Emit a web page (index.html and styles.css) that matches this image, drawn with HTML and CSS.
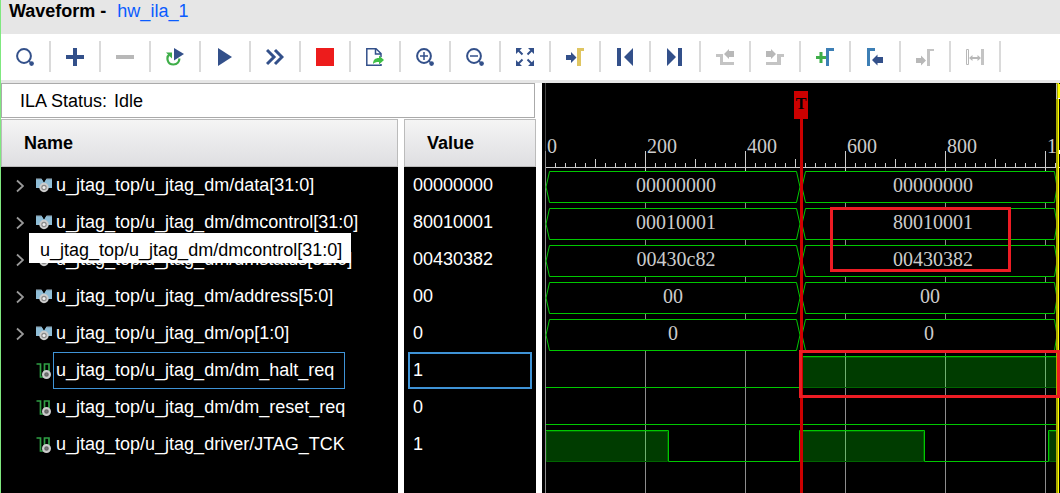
FILE: index.html
```html
<!DOCTYPE html>
<html lang="en">
<head>
<meta charset="utf-8">
<title>Waveform - hw_ila_1</title>
<link rel="stylesheet" href="styles.css">
</head>
<body>
<svg class="defs" aria-hidden="true">
  <defs>
    <symbol id="chevron" viewBox="0 0 8 14"><path d="M1 1.5L7 7L1 12.5" fill="none" stroke="#999" stroke-width="1.8"/></symbol>
    <symbol id="bus" viewBox="0 0 16 16">
      <path d="M0 1h6l2 3 2-3h6v9h-3l-5 1-5-1H0z" fill="#8fbdd6"/>
      <path d="M0 .8h5.500M10.500.8H16" stroke="#6f7f8a" fill="none"/>
      <path d="M6 1l2 3.500L10 1z" fill="#000"/>
      <circle cx="8" cy="9.500" r="3.700" fill="#8a8a8a" stroke="#ccc" stroke-width="2"/><circle cx="8" cy="9.500" r="1.500" fill="#eee"/>
    </symbol>
    <symbol id="scalar" viewBox="0 0 16 16">
      <path d="M.5 1h4v13h4V1h4.500v7" fill="none" stroke="#2f9e44" stroke-width="1.700"/>
      <circle cx="10.500" cy="11.500" r="3.400" fill="#666" stroke="#ccc" stroke-width="2.200"/><circle cx="10.500" cy="11.500" r="1" fill="#777"/>
    </symbol>
    <symbol id="lens" viewBox="0 0 18 18"><circle cx="8" cy="8" r="6.900" fill="none" stroke="#33508a" stroke-width="2"/><path d="M12.500 12.500l1.500 1.500" stroke="#33508a" stroke-width="2"/><circle cx="15.600" cy="15.600" r="2.300" fill="#33508a"/></symbol>
  </defs>
</svg>

<header class="titlebar"><h1 class="title">Waveform - </h1><a class="core" href="#hw_ila_1">hw_ila_1</a></header>

<nav class="toolbar" aria-label="Waveform tools">
  <button class="tool" aria-label="Find"><svg class="icon" viewBox="0 -1 18 19"><use href="#lens" width="18" height="18"/></svg></button>
  <button class="tool" aria-label="Add"><svg class="icon" viewBox="0 -1 18 19"><path d="M0 7h7V0h4v7h7v4h-7v7H7v-7H0z" fill="#33508a"/></svg></button>
  <button class="tool" aria-label="Remove"><svg class="icon" viewBox="0 -1 18 19"><path d="M0 7h18v4H0z" fill="#b8b8b8"/></svg></button>
  <button class="tool" aria-label="Auto re-trigger"><svg class="icon" viewBox="0 -1 18 19"><path d="M8 0l10 6-10 6.500z" fill="#33508a"/><path d="M3.500 6.500C0 9 1 16.500 7.500 16.500c4 0 6-3 5.800-6" fill="none" stroke="#3fae49" stroke-width="2.200"/><path d="M0 4.500h6v6z" fill="#3fae49"/></svg></button>
  <button class="tool" aria-label="Run trigger"><svg class="icon" viewBox="0 -1 18 19"><path d="M2 0l14 9-14 9z" fill="#33508a"/></svg></button>
  <button class="tool" aria-label="Run immediate"><svg class="icon" viewBox="0 -1 18 19"><path d="M1 2l7 7-7 7M9 2l7 7-7 7" fill="none" stroke="#33508a" stroke-width="3"/></svg></button>
  <button class="tool" aria-label="Stop"><svg class="icon" viewBox="0 -1 18 19"><path d="M0 0h18v18H0z" fill="#ed1c1c"/></svg></button>
  <button class="tool" aria-label="Export data"><svg class="icon" viewBox="0 -1 18 19"><path d="M15 9V5.500L10 .8H.8v16.400H15V16M9.500 1v5H15" fill="none" stroke="#33508a" stroke-width="1.500"/><path d="M7 16c0-4 2-6 6-6V7.500l5 4.500-5 4.500V14c-3 0-4.500.5-6 2z" fill="#3fbf46"/></svg></button>
  <button class="tool" aria-label="Zoom in"><svg class="icon" viewBox="0 -1 18 19"><use href="#lens" width="18" height="18"/><path d="M4 8h8M8 4v8" stroke="#33508a" stroke-width="1.500"/></svg></button>
  <button class="tool" aria-label="Zoom out"><svg class="icon" viewBox="0 -1 18 19"><use href="#lens" width="18" height="18"/><path d="M4 8h8" stroke="#33508a" stroke-width="1.500"/></svg></button>
  <button class="tool" aria-label="Zoom fit"><svg class="icon" viewBox="0 -1 18 19"><path d="M0 0h6L0 6zM12 0h6v6zM0 12v6h6zM18 12v6h-6z" fill="#33508a"/><path d="M2 2l4.500 4.500M16 2l-4.500 4.500M2 16l4.500-4.500M16 16l-4.500-4.500" stroke="#33508a" stroke-width="2"/></svg></button>
  <button class="tool" aria-label="Go to cursor"><svg class="icon" viewBox="0 -1 18 19"><path d="M0 7h5V4l5.500 5.500L5 15v-3H0z" fill="#33508a"/><path d="M11 0h7v3h-3v15h-4z" fill="#dfc561"/></svg></button>
  <button class="tool" aria-label="Go to first"><svg class="icon" viewBox="0 -1 18 19"><path d="M1 0h4v18H1zM17 0v18L8 9z" fill="#33508a"/></svg></button>
  <button class="tool" aria-label="Go to last"><svg class="icon" viewBox="0 -1 18 19"><path d="M12 0h4v18h-4zM1 0v18l9-9z" fill="#33508a"/></svg></button>
  <button class="tool" aria-label="Previous transition" disabled><svg class="icon" viewBox="0 -1 18 19"><path d="M0 6h7v8h11v3H4V9H0z" fill="#c4c4c4"/><path d="M8 6l5-5v2h5v6h-5v2z" fill="#b8b8b8"/></svg></button>
  <button class="tool" aria-label="Next transition" disabled><svg class="icon" viewBox="0 -1 18 19"><path d="M18 6h-7v8H0v3h15V9h3z" fill="#c4c4c4"/><path d="M10 6L5 1v2H0v6h5v2z" fill="#b8b8b8"/></svg></button>
  <button class="tool" aria-label="Add marker"><svg class="icon" viewBox="0 -1 18 19"><path d="M0 8h3.500V4h3v4H10v3H6.500v4h-3v-4H0z" fill="#3fae49"/><path d="M10 0h8v3h-5v15h-3z" fill="#3d7fb5"/></svg></button>
  <button class="tool" aria-label="Previous marker"><svg class="icon" viewBox="0 -1 18 19"><path d="M1 0h8v3H4v15H1z" fill="#3d7fb5"/><path d="M6 12l5.500-5.500V9H17v6h-5.500v2.500z" fill="#33508a"/></svg></button>
  <button class="tool" aria-label="Next marker" disabled><svg class="icon" viewBox="0 -1 18 19"><path d="M11 1h7v2h-4v15h-3z" fill="#c4c4c4"/><path d="M10 12.500L5 7.500V10H0v5h5v2.500z" fill="#b8b8b8"/></svg></button>
  <button class="tool" aria-label="Swap cursors" disabled><svg class="icon" viewBox="0 -1 18 19"><path d="M.5 1.500h2v15h-2z" fill="none" stroke="#b8b8b8"/><path d="M15 1h3v16h-3z" fill="#c4c4c4"/><path d="M3 10l3.500-3v2h5V7l3.500 3-3.500 3v-2h-5v2z" fill="#b8b8b8"/></svg></button>
</nav>

<main class="workspace">
  <section class="signals">
    <p class="status"><span>ILA Status:</span><span>Idle</span></p>
    <div class="list">
      <table class="table">
        <thead><tr><th class="name">Name</th><th class="value">Value</th></tr></thead>
        <tbody>
          <tr><td class="name"><div class="signal"><button class="expand" aria-label="Expand data"><svg class="chevron"><use href="#chevron"/></svg></button><svg class="kind"><use href="#bus"/></svg><span class="label">u_jtag_top/u_jtag_dm/data[31:0]</span></div></td><td class="value"><div class="reading">00000000</div></td></tr>
          <tr><td class="name"><div class="signal"><button class="expand" aria-label="Expand dmcontrol"><svg class="chevron"><use href="#chevron"/></svg></button><svg class="kind"><use href="#bus"/></svg><span class="label">u_jtag_top/u_jtag_dm/dmcontrol[31:0]</span><span class="tooltip" role="tooltip">u_jtag_top/u_jtag_dm/dmcontrol[31:0]</span></div></td><td class="value"><div class="reading">80010001</div></td></tr>
          <tr><td class="name"><div class="signal"><button class="expand" aria-label="Expand dmstatus"><svg class="chevron"><use href="#chevron"/></svg></button><svg class="kind"><use href="#bus"/></svg><span class="label">u_jtag_top/u_jtag_dm/dmstatus[31:0]</span></div></td><td class="value"><div class="reading">00430382</div></td></tr>
          <tr><td class="name"><div class="signal"><button class="expand" aria-label="Expand address"><svg class="chevron"><use href="#chevron"/></svg></button><svg class="kind"><use href="#bus"/></svg><span class="label">u_jtag_top/u_jtag_dm/address[5:0]</span></div></td><td class="value"><div class="reading">00</div></td></tr>
          <tr><td class="name"><div class="signal"><button class="expand" aria-label="Expand op"><svg class="chevron"><use href="#chevron"/></svg></button><svg class="kind"><use href="#bus"/></svg><span class="label">u_jtag_top/u_jtag_dm/op[1:0]</span></div></td><td class="value"><div class="reading">0</div></td></tr>
          <tr class="selected"><td class="name"><div class="signal"><span class="expand"></span><svg class="kind"><use href="#scalar"/></svg><span class="label">u_jtag_top/u_jtag_dm/dm_halt_req</span></div></td><td class="value"><div class="reading">1</div></td></tr>
          <tr><td class="name"><div class="signal"><span class="expand"></span><svg class="kind"><use href="#scalar"/></svg><span class="label">u_jtag_top/u_jtag_dm/dm_reset_req</span></div></td><td class="value"><div class="reading">0</div></td></tr>
          <tr><td class="name"><div class="signal"><span class="expand"></span><svg class="kind"><use href="#scalar"/></svg><span class="label">u_jtag_top/u_jtag_driver/JTAG_TCK</span></div></td><td class="value"><div class="reading">1</div></td></tr>
          <tr class="rest"><td class="name"></td><td class="value"></td></tr>
        </tbody>
      </table>
    </div>
  </section>

  <section class="wave" aria-label="Waveform">
    <svg class="plot">
      <defs>
        <pattern id="ticks" x="3" y="0" width="100" height="100" patternUnits="userSpaceOnUse">
          <path d="M10 80h1v4h-1zM20 80h1v4h-1zM30 80h1v4h-1zM40 80h1v4h-1zM50 76h1v8h-1zM60 80h1v4h-1zM70 80h1v4h-1zM80 80h1v4h-1zM90 80h1v4h-1z" fill="#ccc"/>
        </pattern>
        <g id="busrow" fill="#000" stroke="#00c800">
          <path d="M7.500 .5H254.500L258 16L254.500 31.500H7.500L4 16z"/>
          <path d="M263.500 .5H512.500L515 16L512.500 31.500H263.500L260 16z"/>
        </g>
      </defs>

      <g fill="#8c8c8c">
        <rect x="3" width="1" height="100%" fill="#444"/>
        <rect x="3" y="68" width="1" height="100%"/>
        <rect x="103" y="88" width="1" height="100%"/>
        <rect x="203" y="88" width="1" height="100%"/>
        <rect x="303" y="88" width="1" height="100%"/>
        <rect x="403" y="88" width="1" height="100%"/>
        <rect x="503" y="88" width="1" height="100%"/>
      </g>
      <rect x="4" width="510" height="88" fill="url(#ticks)"/>
      <path d="M103 68h1v20h-1zM203 68h1v20h-1zM303 68h1v20h-1zM403 68h1v20h-1zM503 68h1v20h-1z" fill="#ccc"/>
      <rect x="4" y="84" width="514" height="1" fill="#ccc"/>
      <g class="digits"><text x="5" y="70">0</text><text x="105" y="70">200</text><text x="205" y="70">400</text><text x="305" y="70">600</text><text x="405" y="70">800</text><svg width="514" height="88"><text x="505" y="70">1000</text></svg></g>

      <use href="#busrow" y="88"/><use href="#busrow" y="125"/><use href="#busrow" y="162"/><use href="#busrow" y="199"/><use href="#busrow" y="236"/>
      <g class="digits centered">
        <text x="134" y="109">00000000</text><text x="391" y="109">00000000</text>
        <text x="134" y="146">00010001</text><text x="391" y="146">80010001</text>
        <text x="134" y="183">00430c82</text><text x="391" y="183">00430382</text>
        <text x="131" y="220">00</text><text x="388" y="220">00</text>
        <text x="131" y="257">0</text><text x="387" y="257">0</text>
      </g>

      <g fill="#003c00" stroke="#006400">
        <path d="M258.500 274.500H515V304.500H258.500z"/>
        <path d="M4.500 348.500H125.500V378.500H4.500zM258.500 348.500H381.500V378.500H258.500zM507.500 348.500H515V378.500H507.500z"/>
      </g>
      <g fill="none" stroke="#00c800">
        <path d="M4 304.500H258.500V273.500H514M4 341.500H514"/>
        <path d="M4 347.500H126.500V378.500H257.500V347.500H382.500V378.500H506.500V347.500H514"/>
      </g>
      <g fill="#70b070"><rect x="303" y="274" width="1" height="30"/><rect x="403" y="274" width="1" height="30"/><rect x="503" y="274" width="1" height="30"/><rect x="103" y="348" width="1" height="30"/><rect x="303" y="348" width="1" height="30"/></g>

      <rect x="514" width="2" height="100%" fill="#a8a800"/>
      <rect x="516" width="1" height="100%" fill="#ff0"/>
      <rect x="514" y="1" width="1" height="15" fill="#bbb"/>
      <path d="M516 1h2v14h-2z" fill="#ff0"/><path d="M516 15h2v1h-2zM517 67h1v4h-1z" fill="#fff"/>

      <rect x="258" y="36" width="3" height="100%" fill="#c00"/>
      <rect x="252" y="8" width="14" height="28" fill="#c00"/>
      <text class="flag" x="259" y="26">T</text>
      <g fill="none" stroke="#ed1c24" stroke-width="3"><path d="M289.500 125.500h178v62h-178z"/><path d="M258.500 268.500h258v45h-258z"/></g>
    </svg>
  </section>
</main>
</body>
</html>
```

FILE: styles.css
```css
* { box-sizing: border-box; }

body {
  margin: 0;
  height: 100vh;
  display: flex;
  flex-direction: column;
  overflow: hidden;
  border-left: 1px solid #7fe87f;
  background: #e6e6e6;
  color: #000;
  font: 18px/22px "Liberation Sans", Arial, sans-serif;
}

.defs { position: absolute; width: 0; height: 0; }

button { padding: 0; border: 0; background: none; }

.titlebar { display: flex; gap: 11px; height: 34px; padding-left: 8px; }
.title { margin: 0; font-size: 18px; line-height: 22px; }
.core { color: #0a5cff; text-decoration: none; }

.toolbar {
  display: flex;
  padding: 7px 0 8px;
  margin-bottom: 3px;
  background: #fff;
}
.tool {
  display: flex;
  flex: 0 0 50px;
  align-items: center;
  justify-content: center;
  height: 31px;
  border-right: 2px solid #dadada;
}
.icon { width: 18px; height: 19px; }

.workspace { display: flex; flex: 1; min-height: 0; background: #fff; }

.signals { display: flex; flex-direction: column; flex: 0 0 541px; }
.status {
  display: flex;
  gap: 7px;
  margin: 0 7px 1px 0;
  padding: 6px 18px 4px;
  border: 1px solid #aaa;
  line-height: 23px;
}
.list { flex: 1; min-height: 0; }

.table { width: 100%; height: 100%; border-spacing: 0; table-layout: fixed; }
.table th {
  height: 48px;
  padding: 0 23px;
  background: linear-gradient(#f5f5f5, #dedee1) padding-box;
  box-shadow: inset 0 0 0 1px #bbb;
  text-align: left;
}
.table td { height: 37px; padding: 0; background: #000; color: #fff; }
.table .rest td { height: auto; }
.table .name, .table .value { border-right: 6px solid #fff; }
.table th.name { width: 403px; }

.signal { position: relative; display: flex; align-items: center; height: 37px; padding-left: 15px; white-space: nowrap; }
.expand { flex: 0 0 20px; display: flex; }
.chevron { width: 8px; height: 14px; }
.kind { width: 16px; height: 16px; margin-right: 1px; }
.label { padding: 6px 10px 7px 2px; border: 1px solid transparent; }
.selected .label { border-color: #3f93d6; }
.tooltip {
  position: absolute;
  z-index: 1;
  top: 29px;
  left: 28px;
  padding: 6px 9px 2px 11px;
  background: #fff;
  color: #000;
}
.reading { margin: 0 4px; padding: 5px 3px 6px; border: 2px solid transparent; }
.selected .reading { border-color: #3f93d6; }

.wave { flex: 1; min-width: 0; background: #000; }
.plot { display: block; width: 100%; height: 100%; }
.digits { fill: #ccc; font: 20px "Liberation Serif", "Times New Roman", serif; }
.centered { text-anchor: middle; }
.flag { fill: #000; font: bold 16px "Liberation Serif", "Times New Roman", serif; text-anchor: middle; }
```
